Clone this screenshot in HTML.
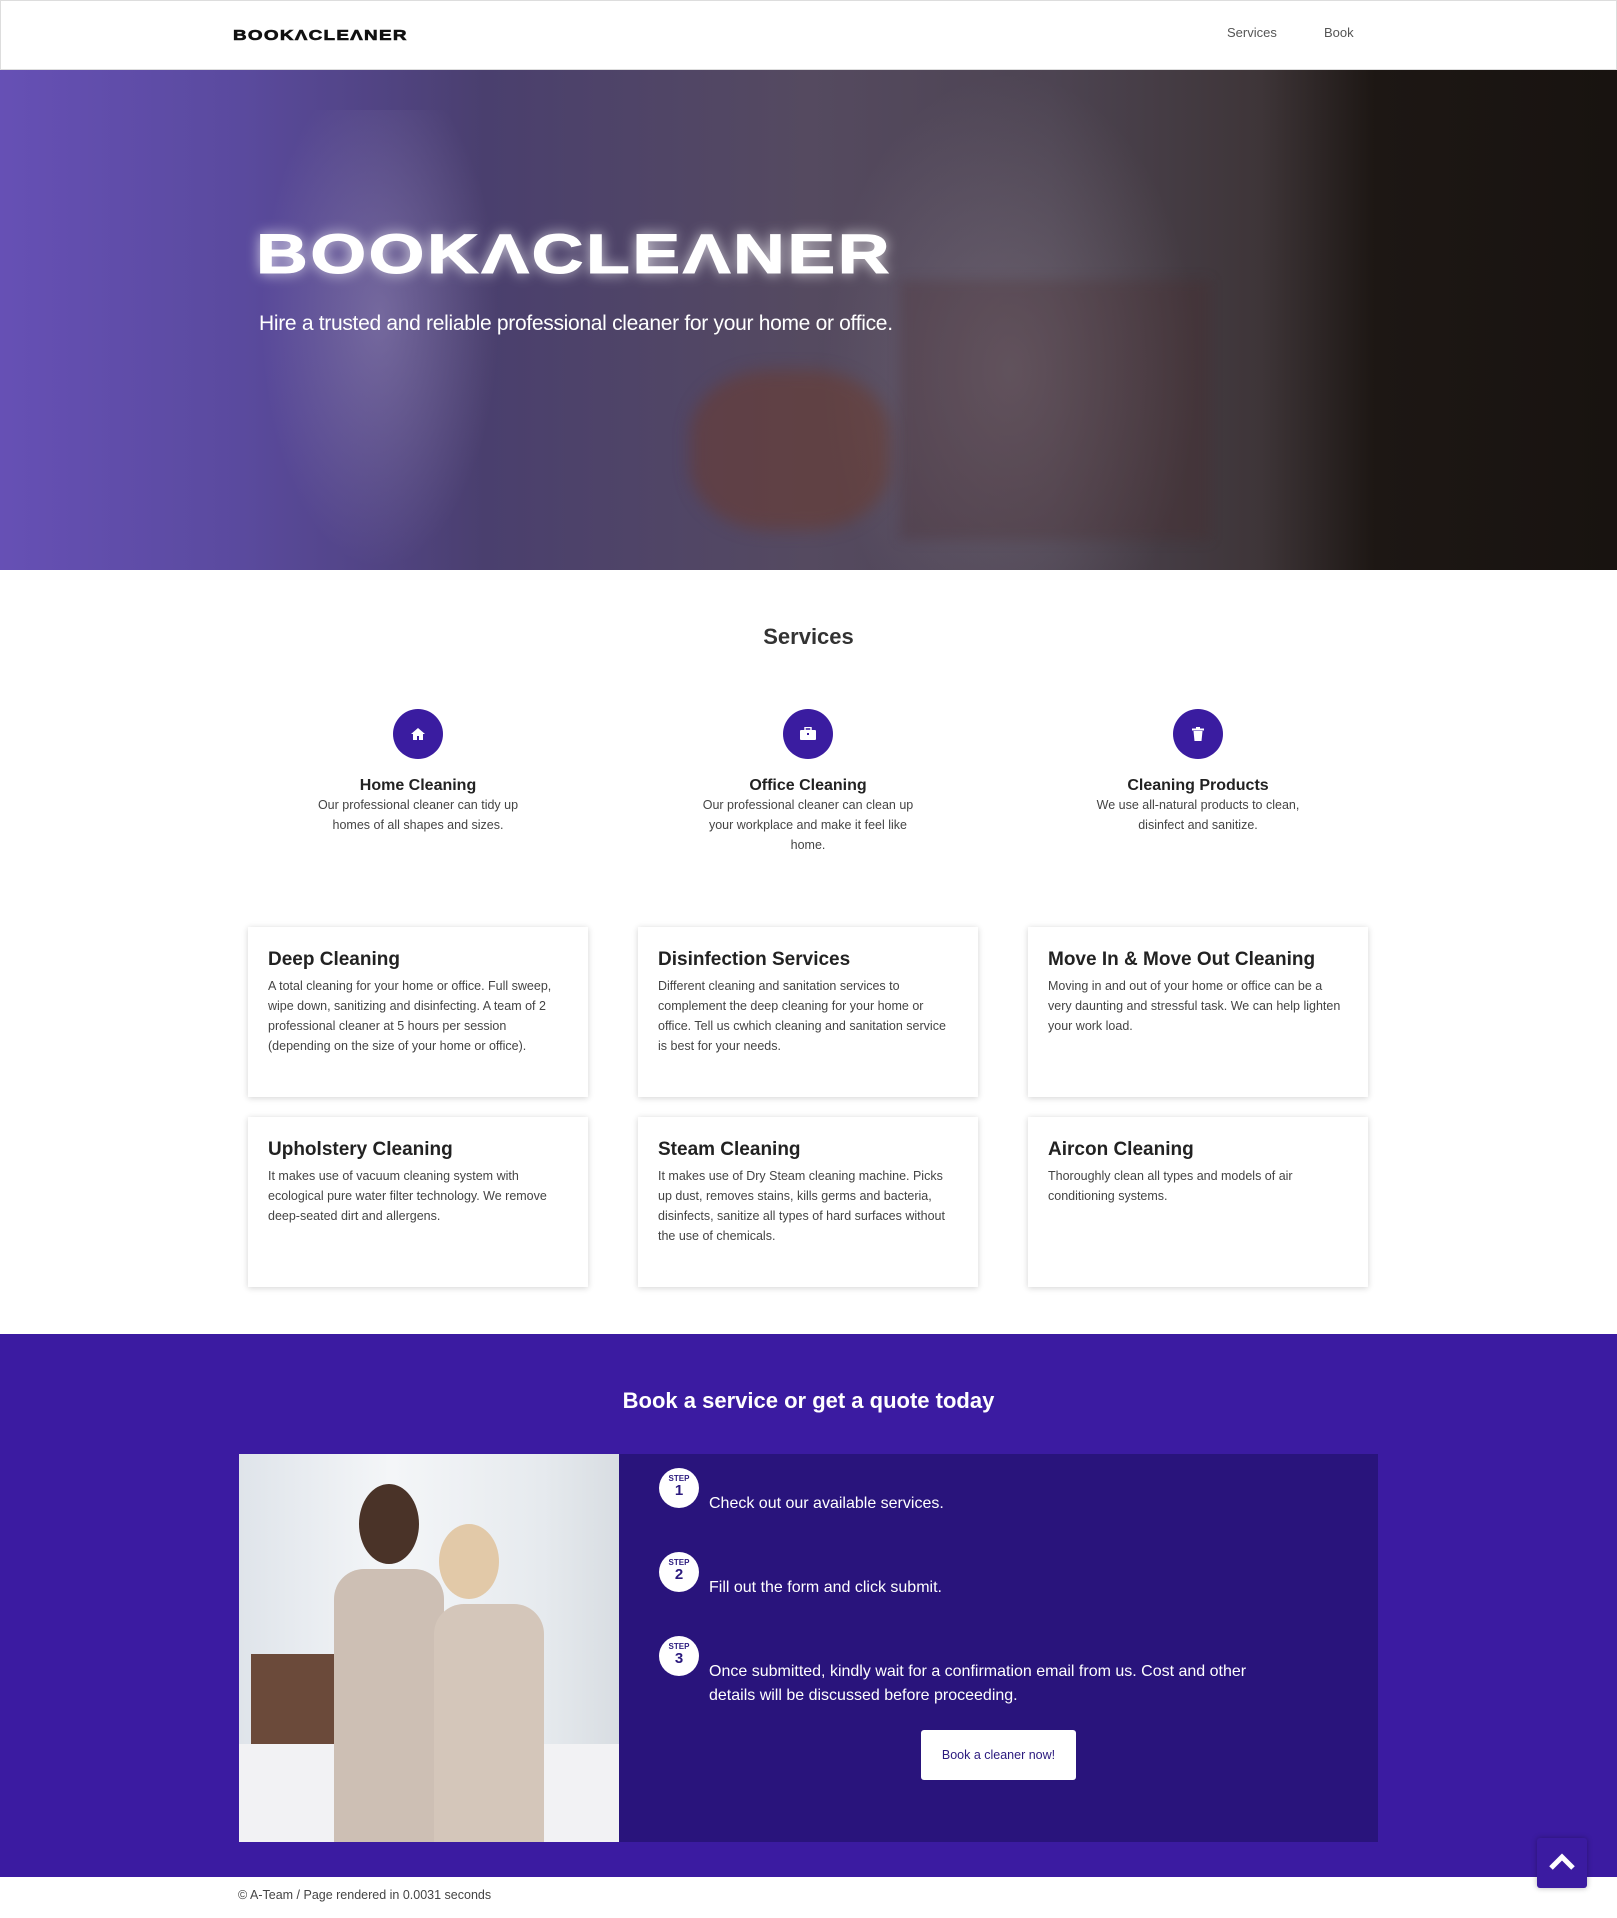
<!DOCTYPE html>
<html><head><meta charset="utf-8"><style>
*{margin:0;padding:0;box-sizing:border-box}
body{width:1617px;height:1918px;background:#fff;font-family:"Liberation Sans",sans-serif;position:relative;overflow:hidden;color:#333}
.abs{position:absolute}
nav{position:absolute;left:0;top:0;width:1617px;height:70px;border:1px solid #ddd;background:#fff}
.logo{position:absolute;left:232px;top:26px;font-weight:900;font-size:15px;letter-spacing:1px;color:#111;transform:scaleX(1.26);transform-origin:left;-webkit-text-stroke:.6px #111}
.nl{position:absolute;top:24px;font-size:13px;color:#555}
.hero{position:absolute;left:0;top:70px;width:1617px;height:500px;background:linear-gradient(90deg,#6650b5 0%,#5a4a9e 15%,#4a3f6e 30%,#554a60 50%,#4d4452 65%,#3e3538 78%,#1d1714 85%,#181310 100%);overflow:hidden}
.hero h1{position:absolute;left:256px;top:151px;font-size:56px;font-weight:900;color:#fff;letter-spacing:2px;transform:scaleX(1.28);transform-origin:left;text-shadow:0 0 12px rgba(255,255,255,.8);-webkit-text-stroke:1px #fff}
.hero p{position:absolute;left:259px;top:242px;font-size:21px;color:#fff;letter-spacing:-.3px}
h2.s{position:absolute;width:1617px;text-align:center;top:624px;font-size:22px;color:#333;font-weight:bold}
.feat{position:absolute;width:230px;text-align:center}
.feat .c{width:50px;height:50px;border-radius:50%;background:#3a1ca0;margin:0 auto 18px;display:flex;align-items:center;justify-content:center}
.feat h3{font-size:16px;color:#222;margin-bottom:0}
.feat p{font-size:12.5px;line-height:20px;color:#444}
.card{position:absolute;width:340px;height:170px;background:#fff;box-shadow:0 1px 6px rgba(0,0,0,.18);padding:22px 20px}
.card h3{font-size:19px;color:#222;font-weight:bold;margin-bottom:5px}
.card p{font-size:12.5px;line-height:20px;color:#444}
.band{position:absolute;left:0;top:1334px;width:1617px;height:543px;background:#3b1ba1}
.band h2{position:absolute;width:1617px;text-align:center;top:54px;color:#fff;font-size:22px}
.panel{position:absolute;left:239px;top:120px;width:1139px;height:388px;background:#29147c}
.img{position:absolute;left:0;top:0;width:380px;height:388px;background:linear-gradient(90deg,#dfe4ea,#f4f6f8 40%,#e6eaee 80%,#d8dde2);overflow:hidden}
.step{position:absolute;left:420px}
.bub{position:absolute;left:0;top:0;width:40px;height:40px;border-radius:50%;background:#fff;color:#2b1a7e;text-align:center;font-weight:bold}
.bub small{display:block;font-size:8px;margin-top:6px;line-height:9px}
.bub b{display:block;font-size:15px;line-height:15px}
.st{position:absolute;left:50px;color:#fff;font-size:16px;line-height:24px;width:560px}
.btn{position:absolute;left:682px;top:276px;width:155px;height:50px;background:#fff;border-radius:3px;color:#2b1a7e;font-size:12.5px;text-align:center;line-height:50px}
.top{position:absolute;left:1537px;top:1838px;width:50px;height:50px;background:#3b1ba1;border-radius:3px;box-shadow:0 0 6px rgba(0,0,0,.3)}
.foot{position:absolute;left:238px;top:1888px;font-size:12.5px;color:#444}
</style></head><body>
<nav><div class="logo">BOOKΛCLEΛNER</div><div class="nl" style="left:1226px">Services</div><div class="nl" style="left:1323px">Book</div></nav>
<div class="hero">
<div class="abs" style="left:260px;top:40px;width:240px;height:460px;background:radial-gradient(ellipse at 50% 45%,rgba(200,190,220,.3),transparent 70%)"></div>
<div class="abs" style="left:820px;top:0;width:380px;height:500px;background:radial-gradient(ellipse at 50% 60%,rgba(170,160,170,.3),transparent 70%)"></div>
<div class="abs" style="left:690px;top:300px;width:200px;height:160px;border-radius:40%;background:rgba(110,55,35,.45);filter:blur(8px)"></div>
<div class="abs" style="left:900px;top:210px;width:310px;height:260px;background:rgba(70,40,40,.25);filter:blur(6px)"></div>
<h1>BOOKΛCLEΛNER</h1>
<p>Hire a trusted and reliable professional cleaner for your home or office.</p>
</div>
<h2 class="s">Services</h2>
<div class="feat" style="left:303px;top:709px"><div class="c"><svg width="16" height="14" viewBox="0 0 16 14"><path d="M8 1L1 7h2v6h4V9h2v4h4V7h2z" fill="#fff"/></svg></div><h3>Home Cleaning</h3><p>Our professional cleaner can tidy up homes of all shapes and sizes.</p></div>
<div class="feat" style="left:693px;top:709px"><div class="c"><svg width="18" height="14" viewBox="0 0 18 14"><rect x="1" y="3" width="16" height="10" rx="1" fill="#fff"/><rect x="6" y="0.5" width="6" height="3" fill="none" stroke="#fff" stroke-width="1.4"/><rect x="8" y="6" width="2" height="2" fill="#3a1ca0"/></svg></div><h3>Office Cleaning</h3><p>Our professional cleaner can clean up your workplace and make it feel like home.</p></div>
<div class="feat" style="left:1083px;top:709px"><div class="c"><svg width="12" height="14" viewBox="0 0 12 14"><rect x="0" y="1.5" width="12" height="2" fill="#fff"/><rect x="4" y="0" width="4" height="2" fill="#fff"/><path d="M1.5 4h9l-1 10h-7z" fill="#fff"/></svg></div><h3>Cleaning Products</h3><p>We use all-natural products to clean, disinfect and sanitize.</p></div>
<div class="card" style="left:248px;top:927px"><h3>Deep Cleaning</h3><p>A total cleaning for your home or office. Full sweep, wipe down, sanitizing and disinfecting. A team of 2 professional cleaner at 5 hours per session (depending on the size of your home or office).</p></div>
<div class="card" style="left:638px;top:927px"><h3>Disinfection Services</h3><p>Different cleaning and sanitation services to complement the deep cleaning for your home or office. Tell us cwhich cleaning and sanitation service is best for your needs.</p></div>
<div class="card" style="left:1028px;top:927px"><h3>Move In &amp; Move Out Cleaning</h3><p>Moving in and out of your home or office can be a very daunting and stressful task. We can help lighten your work load.</p></div>
<div class="card" style="left:248px;top:1117px"><h3>Upholstery Cleaning</h3><p>It makes use of vacuum cleaning system with ecological pure water filter technology. We remove deep-seated dirt and allergens.</p></div>
<div class="card" style="left:638px;top:1117px"><h3>Steam Cleaning</h3><p>It makes use of Dry Steam cleaning machine. Picks up dust, removes stains, kills germs and bacteria, disinfects, sanitize all types of hard surfaces without the use of chemicals.</p></div>
<div class="card" style="left:1028px;top:1117px"><h3>Aircon Cleaning</h3><p>Thoroughly clean all types and models of air conditioning systems.</p></div>
<div class="band"><h2>Book a service or get a quote today</h2>
<div class="panel">
<div class="img">
<div class="abs" style="left:12px;top:200px;width:100px;height:100px;background:#6b4a3a"></div>
<div class="abs" style="left:0;top:290px;width:380px;height:100px;background:#f2f2f4"></div>
<div class="abs" style="left:120px;top:30px;width:60px;height:80px;border-radius:50%;background:#4a3328"></div>
<div class="abs" style="left:200px;top:70px;width:60px;height:75px;border-radius:50%;background:#e2c9a8"></div>
<div class="abs" style="left:95px;top:115px;width:110px;height:273px;border-radius:30px 30px 0 0;background:#cdbfb4"></div>
<div class="abs" style="left:195px;top:150px;width:110px;height:238px;border-radius:30px 30px 0 0;background:#d4c6ba"></div>
</div>
<div class="step" style="top:14px"><div class="bub"><small>STEP</small><b>1</b></div><div class="st" style="top:24px">Check out our available services.</div></div>
<div class="step" style="top:98px"><div class="bub"><small>STEP</small><b>2</b></div><div class="st" style="top:24px">Fill out the form and click submit.</div></div>
<div class="step" style="top:182px"><div class="bub"><small>STEP</small><b>3</b></div><div class="st" style="top:24px">Once submitted, kindly wait for a confirmation email from us. Cost and other details will be discussed before proceeding.</div></div>
<div class="btn">Book a cleaner now!</div>
</div></div>
<div class="top"><svg width="50" height="50" viewBox="0 0 50 50"><path d="M14 30L25 19L36 30" fill="none" stroke="#fff" stroke-width="5"/></svg></div>
<div class="foot">© A-Team / Page rendered in 0.0031 seconds</div>
</body></html>
